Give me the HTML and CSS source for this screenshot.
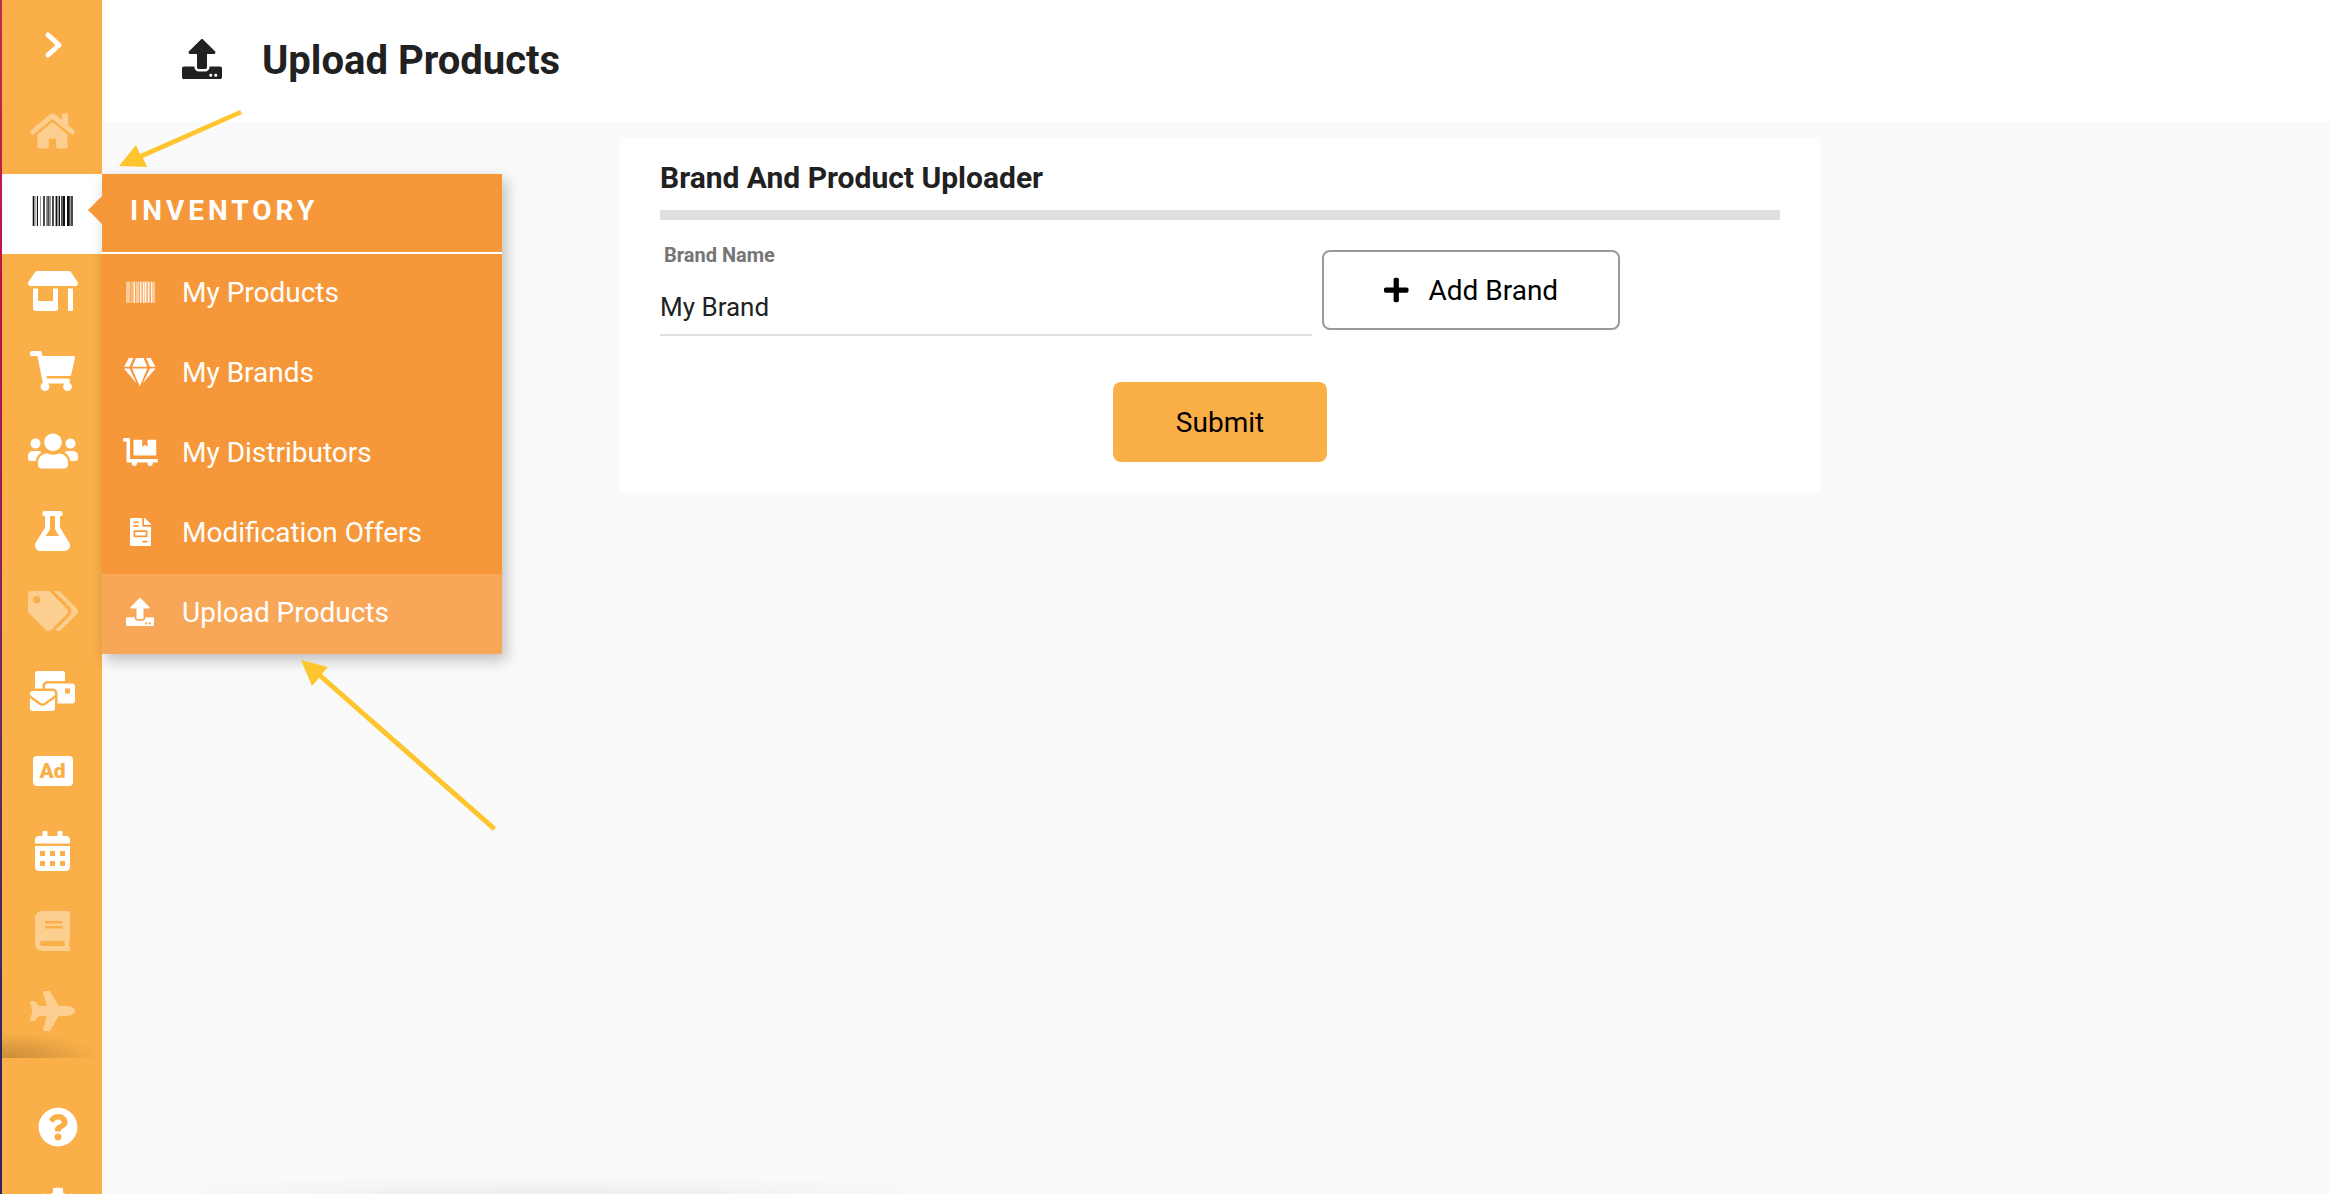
FILE: index.html
```html
<!DOCTYPE html>
<html lang="en">
<head>
<meta charset="utf-8">
<title>Upload Products</title>
<link rel="stylesheet" href="styles.css">
</head>
<body>
<aside class="sidebar">
  <nav class="nav" aria-label="Main">
    <button class="nav-toggle" type="button" aria-label="Expand menu">
      <svg class="icon" viewBox="0 0 50 40"><path d="M20 10l11 10-11 10" fill="none" stroke="currentColor" stroke-width="5" stroke-linecap="round" stroke-linejoin="round"/></svg>
    </button>
    <ul class="nav-list">
      <li class="nav-item"><a class="nav-link faded" href="#" aria-label="Home"><svg class="icon" viewBox="0 0 576 512"><path d="M280.37 148.26L96 300.11V464a16 16 0 0 0 16 16l112.06-.29a16 16 0 0 0 15.92-16V368a16 16 0 0 1 16-16h64a16 16 0 0 1 16 16v95.64a16 16 0 0 0 16 16.05L464 480a16 16 0 0 0 16-16V300L295.67 148.26a12.19 12.19 0 0 0-15.3 0zM571.6 251.47L488 182.56V44.05a12 12 0 0 0-12-12h-56a12 12 0 0 0-12 12v72.61L318.47 43a48 48 0 0 0-61 0L4.34 251.47a12 12 0 0 0-1.6 16.9l25.5 31A12 12 0 0 0 45.15 301l235.22-193.74a12.19 12.19 0 0 1 15.3 0L530.9 301a12 12 0 0 0 16.9-1.6l25.5-31a12 12 0 0 0-1.7-16.93z"/></svg></a></li>
      <li class="nav-item">
        <a class="nav-link active" href="#" aria-label="Inventory"><svg class="icon" viewBox="0 0 150 120"><g fill="#111"><path d="M15 15h3v90h-3zM27 15h3v90h-3zM58 15h3v90h-3zM84 15h3v90h-3zM93 15h3v90h-3zM104 15h7v90h-7zM117 15h6v90h-6z"/><g fill="#4a4a4a"><path d="M45 15h6v90h-6zM60 15h3v90h-3zM72 15h6v90h-6zM99 15h5v90h-5zM123 15h3v90h-3zM129 15h6v90h-6z"/></g><g fill="#999"><path d="M13 15h2v90h-2zM18 15h4v90h-4zM23 15h2v90h-2zM36 15h3v90h-3zM54 15h4v90h-4zM63 15h6v90h-6zM81 15h3v90h-3zM87 15h6v90h-6zM126 15h3v90h-3z"/></g></g></svg></a>
        <div class="submenu">
          <h2 class="submenu-title">INVENTORY</h2>
          <ul class="submenu-list">
            <li><a class="submenu-link" href="#"><span class="submenu-icon"><svg viewBox="0 0 87 84"><path fill-opacity=".5" d="M0 11h12v63H0zM12 11h75v63H12z"/><path fill-opacity=".8" d="M24 11h3v63h-3zM42 11h3v63h-3zM51 11h3v63h-3zM57 11h3v63h-3zM66 11h3v63h-3zM75 11h3v63h-3z"/><path fill="#f6973a" fill-opacity=".7" d="M12 11h4v63h-4zM19 11h2v63h-2zM27 11h3v63h-3zM39 11h3v63h-3zM48 11h2v63h-2zM63 11h2v63h-2zM72 11h3v63h-3z"/></svg></span>My Products</a></li>
            <li><a class="submenu-link" href="#"><span class="submenu-icon"><svg viewBox="0 0 576 512"><path d="M485.5 0L576 160H474.9L405.7 0h79.8zm-128 0l69.2 160H149.3L218.5 0h139zm-267 0h79.8l-69.2 160H0L90.5 0zM0 192h100.7l123 251.7c1.5 3.1-2.7 5.9-5 3.3L0 192zm148.2 0h279.6l-137 318.2c-1 2.4-4.5 2.4-5.5 0L148.2 192zm204.1 251.7l123-251.7H576L357.3 446.9c-2.3 2.7-6.5-.1-5-3.2z"/></svg></span>My Brands</a></li>
            <li><a class="submenu-link" href="#"><span class="submenu-icon"><svg viewBox="0 0 640 512"><path d="M208 320h384c8.8 0 16-7.2 16-16V48c0-8.8-7.2-16-16-16H448v128l-48-32-48 32V32H208c-8.8 0-16 7.2-16 16v256c0 8.8 7.2 16 16 16zm416 64H128V16c0-8.8-7.2-16-16-16H16C7.2 0 0 7.2 0 16v32c0 8.8 7.2 16 16 16h48v368c0 8.8 7.2 16 16 16h82.9c-1.8 5-2.9 10.4-2.9 16 0 26.5 21.5 48 48 48s48-21.5 48-48c0-5.6-1.2-11-2.9-16H451c-1.8 5-2.9 10.4-2.9 16 0 26.5 21.5 48 48 48s48-21.5 48-48c0-5.6-1.2-11-2.9-16H624c8.8 0 16-7.2 16-16v-32c0-8.8-7.2-16-16-16z"/></svg></span>My Distributors</a></li>
            <li><a class="submenu-link" href="#"><span class="submenu-icon"><svg viewBox="0 0 384 512"><path d="M288 256H96v64h192v-64zm89-151L279.1 7c-4.5-4.5-10.6-7-17-7H256v128h128v-6.1c0-6.3-2.5-12.4-7-16.9zm-153 31V0H24C10.7 0 0 10.7 0 24v464c0 13.3 10.7 24 24 24h336c13.3 0 24-10.7 24-24V160H248c-13.2 0-24-10.8-24-24zM64 72c0-4.42 3.58-8 8-8h80c4.42 0 8 3.58 8 8v16c0 4.42-3.58 8-8 8H72c-4.42 0-8-3.58-8-8V72zm0 64c0-4.42 3.58-8 8-8h80c4.42 0 8 3.58 8 8v16c0 4.42-3.58 8-8 8H72c-4.42 0-8-3.58-8-8v-16zm256 304c0 4.42-3.58 8-8 8h-80c-4.42 0-8-3.58-8-8v-16c0-4.42 3.58-8 8-8h80c4.42 0 8 3.58 8 8v16zm0-200v96c0 8.84-7.16 16-16 16H80c-8.84 0-16-7.16-16-16v-96c0-8.84 7.16-16 16-16h224c8.84 0 16 7.16 16 16z"/></svg></span>Modification Offers</a></li>
            <li><a class="submenu-link current" href="#" aria-current="page"><span class="submenu-icon"><svg viewBox="0 0 512 512"><path d="M296 384h-80c-13.3 0-24-10.7-24-24V192h-87.7c-17.8 0-26.7-21.5-14.1-34.1L242.3 5.7c7.5-7.5 19.8-7.5 27.3 0l152.2 152.2c12.6 12.6 3.7 34.1-14.1 34.1H320v168c0 13.3-10.7 24-24 24zm216-8v112c0 13.3-10.7 24-24 24H24c-13.3 0-24-10.7-24-24V376c0-13.3 10.7-24 24-24h136v8c0 30.9 25.1 56 56 56h80c30.9 0 56-25.1 56-56v-8h136c13.3 0 24 10.7 24 24zm-124 88c0-11-9-20-20-20s-20 9-20 20 9 20 20 20 20-9 20-20zm64 0c0-11-9-20-20-20s-20 9-20 20 9 20 20 20 20-9 20-20z"/></svg></span>Upload Products</a></li>
          </ul>
        </div>
      </li>
      <li class="nav-item"><a class="nav-link" href="#" aria-label="Store"><svg class="icon" viewBox="0 0 640 512"><path d="M320 384H128V224H64v256c0 17.7 14.3 32 32 32h256c17.7 0 32-14.3 32-32V224h-64v160zm314.6-241.8l-85.3-128c-6-8.9-16-14.2-26.7-14.2H117.4c-10.7 0-20.7 5.3-26.6 14.2l-85.3 128c-14.2 21.3 1 49.8 26.6 49.8H608c25.5 0 40.7-28.5 26.6-49.8zM512 496c0 8.8 7.2 16 16 16h32c8.8 0 16-7.2 16-16V224h-64v272z"/></svg></a></li>
      <li class="nav-item"><a class="nav-link" href="#" aria-label="Orders"><svg class="icon" viewBox="0 0 576 512"><path d="M528.12 301.319l47.273-208C578.806 78.301 567.391 64 551.99 64H159.208l-9.166-44.81C147.758 8.021 137.93 0 126.529 0H24C10.745 0 0 10.745 0 24v16c0 13.255 10.745 24 24 24h69.883l70.248 343.435C147.325 417.1 136 435.222 136 456c0 30.928 25.072 56 56 56s56-25.072 56-56c0-15.674-6.447-29.835-16.824-40h209.647C430.447 426.165 424 440.326 424 456c0 30.928 25.072 56 56 56s56-25.072 56-56c0-22.172-12.888-41.332-31.579-50.405l5.517-24.276c3.413-15.018-8.002-29.319-23.403-29.319H218.117l-6.545-32h293.145c11.206 0 20.92-7.754 23.403-18.681z"/></svg></a></li>
      <li class="nav-item"><a class="nav-link" href="#" aria-label="Customers"><svg class="icon" viewBox="0 0 640 512"><path d="M96 224c35.3 0 64-28.7 64-64s-28.7-64-64-64-64 28.7-64 64 28.7 64 64 64zm448 0c35.3 0 64-28.7 64-64s-28.7-64-64-64-64 28.7-64 64 28.7 64 64 64zm32 32h-64c-17.6 0-33.5 7.1-45.1 18.6 40.3 22.1 68.9 62 75.1 109.4h66c17.7 0 32-14.3 32-32v-32c0-35.3-28.7-64-64-64zm-256 0c61.9 0 112-50.1 112-112S381.9 32 320 32 208 82.1 208 144s50.1 112 112 112zm76.8 32h-8.3c-20.8 10-43.9 16-68.5 16s-47.6-6-68.5-16h-8.3C179.6 288 128 339.6 128 403.2V432c0 26.5 21.5 48 48 48h288c26.5 0 48-21.5 48-48v-28.8c0-63.6-51.6-115.2-115.2-115.2zm-223.7-13.4C161.5 263.1 145.6 256 128 256H64c-35.3 0-64 28.7-64 64v32c0 17.7 14.3 32 32 32h65.9c6.3-47.4 34.9-87.3 75.2-109.4z"/></svg></a></li>
      <li class="nav-item"><a class="nav-link" href="#" aria-label="Lab"><svg class="icon" viewBox="0 0 448 512"><path d="M437.2 403.5L320 215V64h8c13.3 0 24-10.7 24-24V24c0-13.3-10.7-24-24-24H120c-13.3 0-24 10.7-24 24v16c0 13.3 10.7 24 24 24h8v151L10.8 403.5C-18.5 450.6 15.3 512 70.9 512h306.2c55.7 0 89.4-61.5 60.1-108.5zM137.9 320l48.2-77.6c3.7-5.2 5.8-11.6 5.8-18.4V64h64v160c0 6.9 2.2 13.2 5.8 18.4l48.2 77.6h-172z"/></svg></a></li>
      <li class="nav-item"><a class="nav-link faded" href="#" aria-label="Tags"><svg class="icon" viewBox="0 0 640 512"><path d="M497.941 225.941L286.059 14.059A48 48 0 0 0 252.118 0H48C21.49 0 0 21.49 0 48v204.118a48 48 0 0 0 14.059 33.941l211.882 211.882c18.744 18.745 49.136 18.746 67.882 0l204.118-204.118c18.745-18.745 18.745-49.137 0-67.882zM112 160c-26.51 0-48-21.49-48-48s21.49-48 48-48 48 21.49 48 48-21.49 48-48 48zm513.941 133.823L421.823 497.941c-18.745 18.745-49.137 18.745-67.882 0l-.36-.36L527.64 323.522c16.999-16.999 26.36-39.6 26.36-63.64s-9.362-46.641-26.36-63.64L331.397 0h48.721a48 48 0 0 1 33.941 14.059l211.882 211.882c18.745 18.745 18.745 49.137 0 67.882z"/></svg></a></li>
      <li class="nav-item"><a class="nav-link" href="#" aria-label="Mail"><svg class="icon" viewBox="0 0 576 512"><path d="M160 448c-25.6 0-51.2-22.4-64-32-64-44.8-83.2-60.8-96-70.4V480c0 17.67 14.33 32 32 32h256c17.67 0 32-14.33 32-32V345.6c-12.8 9.6-32 25.6-96 70.4-12.8 9.6-38.4 32-64 32zm128-192H32c-17.67 0-32 14.33-32 32v16c25.6 19.2 22.4 19.2 115.2 86.4 9.6 6.4 28.8 25.6 44.8 25.6s35.2-19.2 44.8-22.4c92.8-67.2 89.6-67.2 115.2-86.4V288c0-17.67-14.33-32-32-32zm256-96H224c-17.67 0-32 14.33-32 32v32h96c33.21 0 60.59 25.42 63.71 57.82l.29-.22V416h192c17.67 0 32-14.33 32-32V192c0-17.67-14.33-32-32-32zm-32 128h-64v-64h64v64zm-352-96c0-35.29 28.71-64 64-64h224V32c0-17.67-14.33-32-32-32H96C78.33 0 64 14.33 64 32v192h96v-32z"/></svg></a></li>
      <li class="nav-item"><a class="nav-link" href="#"><span class="ad-badge">Ad</span></a></li>
      <li class="nav-item"><a class="nav-link" href="#" aria-label="Calendar"><svg class="icon" viewBox="0 0 448 512"><path fill-rule="evenodd" d="M0 160v-48c0-26.500 21.500-48 48-48h48V12c0-6.600 5.400-12 12-12h40c6.600 0 12 5.400 12 12v52h128V12c0-6.600 5.400-12 12-12h40c6.600 0 12 5.400 12 12v52h48c26.500 0 48 21.500 48 48v48zM0 192h448v272c0 26.500-21.500 48-48 48H48c-26.500 0-48-21.500-48-48zM64 256v64h64v-64zM192 256v64h64v-64zM320 256v64h64v-64zM64 384v64h64v-64zM192 384v64h64v-64zM320 384v64h64v-64z"/></svg></a></li>
      <li class="nav-item"><a class="nav-link faded" href="#" aria-label="Guide"><svg class="icon" viewBox="0 0 448 512"><path d="M448 360V24c0-13.300-10.700-24-24-24H96C43 0 0 43 0 96v320c0 53 43 96 96 96h328c13.300 0 24-10.700 24-24v-16c0-7.500-3.500-14.300-8.900-18.700-4.200-15.400-4.200-59.300 0-74.700 5.400-4.300 8.900-11.100 8.900-18.600zM128 134c0-3.300 2.700-6 6-6h212c3.300 0 6 2.700 6 6v20c0 3.300-2.700 6-6 6H134c-3.300 0-6-2.700-6-6v-20zm0 64c0-3.300 2.700-6 6-6h212c3.300 0 6 2.700 6 6v20c0 3.300-2.700 6-6 6H134c-3.300 0-6-2.700-6-6v-20zm253.400 250H96c-17.700 0-32-14.300-32-32 0-17.600 14.400-32 32-32h285.400c-1.900 17.100-1.900 46.900 0 64z"/></svg></a></li>
      <li class="nav-item"><a class="nav-link faded" href="#" aria-label="Travel"><svg class="icon" viewBox="0 0 576 512"><path d="M480 192H365.710L260.610 8.060A16.014 16.014 0 0 0 246.710 0h-65.500c-10.630 0-18.300 10.170-15.380 20.390L214.860 192H112l-43.200-57.600c-3.020-4.030-7.770-6.400-12.800-6.400H16.010C5.600 128-2.040 137.780.49 147.880L32 256 .49 364.120C-2.040 374.220 5.600 384 16.010 384H56c5.040 0 9.780-2.370 12.800-6.400L112 320h102.860l-49.030 171.600c-2.920 10.220 4.750 20.400 15.380 20.400h65.500c5.740 0 11.040-3.080 13.890-8.060L365.710 320H480c35.350 0 96-28.650 96-64s-60.650-64-96-64z"/></svg></a></li>
    </ul>
  </nav>
  <div class="sidebar-footer">
    <a class="footer-link" href="#" aria-label="Help"><svg class="icon" viewBox="0 0 512 512"><path d="M504 256c0 136.997-111.043 248-248 248S8 392.997 8 256C8 119.083 119.043 8 256 8s248 111.083 248 248zM262.655 90c-54.497 0-89.255 22.957-116.549 63.758-3.536 5.286-2.353 12.415 2.715 16.258l34.699 26.310c5.205 3.947 12.621 3.008 16.665-2.122 17.864-22.658 30.113-35.797 57.303-35.797 20.429 0 45.698 13.148 45.698 32.958 0 14.976-12.363 22.667-32.534 33.976C247.128 238.528 216 254.941 216 296v4c0 6.627 5.373 12 12 12h56c6.627 0 12-5.373 12-12v-1.333c0-28.462 83.186-29.647 83.186-106.667 0-58.002-60.165-102-116.531-102zM256 338c-25.365 0-46 20.635-46 46 0 25.364 20.635 46 46 46s46-20.636 46-46c0-25.365-20.635-46-46-46z"/></svg></a>
    <a class="footer-link" href="#" aria-label="Settings"><svg class="icon" viewBox="0 0 512 512"><path d="M487.400 315.700l-42.600-24.600c4.300-23.200 4.300-47 0-70.200l42.600-24.600c4.900-2.800 7.100-8.600 5.500-14-11.100-35.600-30-67.800-54.700-94.600-3.800-4.100-10-5.100-14.800-2.300L380.800 110c-17.900-15.400-38.500-27.300-60.800-35.100V25.800c0-5.600-3.900-10.500-9.400-11.700-36.700-8.200-74.300-7.800-109.200 0-5.500 1.200-9.400 6.100-9.400 11.700V75c-22.200 7.900-42.800 19.800-60.800 35.100L88.700 85.500c-4.900-2.800-11-1.900-14.800 2.300-24.700 26.700-43.600 58.900-54.700 94.600-1.700 5.400.6 11.200 5.500 14L67.300 221c-4.300 23.200-4.300 47 0 70.200l-42.600 24.600c-4.900 2.800-7.100 8.600-5.500 14 11.100 35.600 30 67.800 54.700 94.600 3.800 4.100 10 5.100 14.800 2.300l42.600-24.600c17.900 15.400 38.500 27.300 60.800 35.100v49.200c0 5.600 3.900 10.500 9.400 11.700 36.700 8.200 74.300 7.800 109.200 0 5.500-1.200 9.400-6.100 9.400-11.700v-49.200c22.200-7.900 42.800-19.800 60.800-35.100l42.600 24.600c4.900 2.800 11 1.900 14.800-2.300 24.700-26.700 43.600-58.900 54.700-94.600 1.500-5.500-.7-11.300-5.600-14.100zM256 336c-44.100 0-80-35.900-80-80s35.900-80 80-80 80 35.900 80 80-35.900 80-80 80z"/></svg></a>
  </div>
</aside>
<div class="page">
  <header class="page-header">
    <svg class="icon" viewBox="0 0 512 512"><path d="M296 384h-80c-13.300 0-24-10.700-24-24V192h-87.700c-17.800 0-26.700-21.500-14.100-34.100L242.300 5.700c7.500-7.500 19.800-7.500 27.300 0l152.200 152.200c12.600 12.600 3.700 34.100-14.100 34.100H320v168c0 13.300-10.700 24-24 24zm216-8v112c0 13.300-10.700 24-24 24H24c-13.300 0-24-10.700-24-24V376c0-13.300 10.700-24 24-24h136v8c0 30.900 25.100 56 56 56h80c30.900 0 56-25.100 56-56v-8h136c13.300 0 24 10.700 24 24zm-124 88c0-11-9-20-20-20s-20 9-20 20 9 20 20 20 20-9 20-20zm64 0c0-11-9-20-20-20s-20 9-20 20 9 20 20 20 20-9 20-20z"/></svg>
    <h1 class="page-title">Upload Products</h1>
  </header>
  <main class="content">
    <form class="card">
      <h2 class="card-title">Brand And Product Uploader</h2>
      <div class="brand-row">
        <div class="field">
          <label class="field-label" for="brand">Brand Name</label>
          <input class="field-input" id="brand" type="text" value="My Brand">
        </div>
        <button class="button button-outline" type="button">
          <svg class="plus" viewBox="0 0 448 512"><path d="M416 208H272V64c0-17.670-14.330-32-32-32h-32c-17.670 0-32 14.330-32 32v144H32c-17.670 0-32 14.330-32 32v32c0 17.670 14.330 32 32 32h144v144c0 17.670 14.330 32 32 32h32c17.670 0 32-14.330 32-32V304h144c17.670 0 32-14.330 32-32v-32c0-17.670-14.330-32-32-32z"/></svg>
          Add Brand
        </button>
      </div>
      <button class="button button-primary" type="button">Submit</button>
    </form>
  </main>
</div>
<svg class="arrow arrow-inventory" viewBox="0 0 124 60" aria-hidden="true"><path d="M0 57l17-21 4 9L121 1l2 4L24 49l4 9z"/></svg>
<svg class="arrow arrow-upload" viewBox="0 0 196 172" aria-hidden="true"><path d="M0 0l27 7-6 7L195 167l-3 4L18 18l-7 8z"/></svg>
</body>
</html>
```
FILE: styles.css
```css
* {
  box-sizing: border-box;
}

body {
  margin: 0;
  display: flex;
  height: 100vh;
  background: #fafafa;
  color: #212121;
  font-family: Roboto, "Liberation Sans", sans-serif;
}

h1,
h2,
ul {
  margin: 0;
  padding: 0;
}

ul {
  list-style: none;
}

a {
  color: inherit;
  text-decoration: none;
}

button {
  font: inherit;
}

svg {
  display: block;
  fill: currentColor;
}

.icon {
  height: 40px;
}

/* Sidebar */
.sidebar {
  position: relative;
  z-index: 2;
  display: flex;
  flex: none;
  flex-direction: column;
  width: 102px;
  height: 100vh;
  padding-left: 2px;
  background: linear-gradient(#faaf48, #faaf48) content-box, linear-gradient(#b9304a, #bd1048 25%, #6a2a62 60%, #2c2560 90%);
  color: #fff;
}

.nav {
  flex: none;
  padding-bottom: 4px;
  background: radial-gradient(ellipse 98px 26px at 0 100%, rgba(0, 0, 0, 0.2), transparent);
}

.nav-toggle {
  display: flex;
  align-items: center;
  justify-content: center;
  width: 100%;
  height: 94px;
  padding: 0 0 4px 2px;
  border: 0;
  background: none;
  color: inherit;
}

.nav-item {
  position: relative;
}

.nav-link {
  display: flex;
  align-items: center;
  justify-content: center;
  height: 80px;
  padding: 0 0 6px 1px;
}

.nav-link.active {
  background: #fff;
}

.nav-link.active::after {
  content: "";
  position: absolute;
  z-index: 2;
  top: 22px;
  right: 0;
  width: 14px;
  height: 28px;
  background: #f6973a;
  clip-path: polygon(100% 0, 100% 100%, 0 50%);
}

.faded .icon {
  opacity: 0.4;
}

.ad-badge {
  width: 40px;
  height: 30px;
  border-radius: 4px;
  background: #fff;
  color: #faaf48;
  font-size: 21px;
  font-weight: 900;
  line-height: 30px;
  text-align: center;
}

.sidebar-footer {
  display: flex;
  flex: 1;
  flex-direction: column;
  gap: 40px;
  min-height: 0;
  padding: 49px 0 0 12px;
  overflow: hidden;
}

.footer-link {
  display: flex;
  flex: none;
  justify-content: center;
}

/* Inventory flyout */
.submenu {
  position: absolute;
  z-index: 1;
  top: 0;
  left: 100%;
  width: 400px;
  background: #f6973a;
  box-shadow: 4px 6px 14px rgba(0, 0, 0, 0.25);
}

.submenu-title {
  height: 80px;
  padding-left: 28px;
  border-bottom: 2px solid #fff;
  font-size: 28px;
  line-height: 74px;
  letter-spacing: 4px;
}

.submenu-link {
  display: flex;
  align-items: center;
  gap: 23px;
  height: 80px;
  padding: 0 20px 4px 19px;
  font-size: 28px;
}

.submenu-link.current {
  background: #f8a759;
}

.submenu-icon {
  display: flex;
  justify-content: center;
  width: 38px;
}

.submenu-icon svg {
  height: 28px;
}

/* Page */
.page {
  flex: 1;
  min-width: 0;
  background: radial-gradient(ellipse at 50% 100%, rgba(0, 0, 0, 0.05), transparent 70%) left bottom / 900px 20px no-repeat;
}

.page-header {
  display: flex;
  align-items: center;
  gap: 40px;
  height: 122px;
  padding: 0 80px 4px;
  background: #fff;
}

.page-title {
  padding-top: 4px;
  font-size: 40px;
  line-height: 48px;
}

.content {
  padding: 16px 0 16px 8px;
}

.card {
  display: flex;
  flex-direction: column;
  max-width: 1200px;
  margin: 0 auto;
  padding: 20px 40px 30px;
  background: #fff;
}

.card-title {
  padding-bottom: 12px;
  border-bottom: 10px solid #e0e0e0;
  font-size: 30px;
  line-height: 40px;
}

.brand-row {
  display: flex;
  align-items: flex-start;
  gap: 10px;
  padding-top: 30px;
}

.field {
  display: flex;
  flex: 0 1 652px;
  flex-direction: column;
  min-width: 0;
}

.field-label {
  padding-left: 4px;
  color: #757575;
  font-size: 20px;
  font-weight: 700;
  line-height: 10px;
}

.field-input {
  height: 76px;
  padding: 20px 0 0;
  border: 0;
  border-bottom: 2px solid #e0e0e0;
  outline: 0;
  background: none;
  color: inherit;
  font: inherit;
  font-size: 26px;
}

.button {
  display: flex;
  align-items: center;
  justify-content: center;
  height: 80px;
  padding: 0 63px;
  border: 0;
  border-radius: 8px;
  color: #000;
  font-size: 28px;
}

.button-outline {
  gap: 20px;
  padding: 0 60px;
  border: 2px solid #999;
  background: #fff;
}

.button-primary {
  align-self: center;
  margin-top: 46px;
  background: #faaf48;
}

.plus {
  height: 28px;
}

/* Callout arrows drawn over the page */
.arrow {
  position: absolute;
  z-index: 3;
  fill: #fec52e;
}

.arrow-inventory {
  top: 109px;
  left: 119px;
  width: 124px;
}

.arrow-upload {
  top: 660px;
  left: 301px;
  width: 196px;
}
```
